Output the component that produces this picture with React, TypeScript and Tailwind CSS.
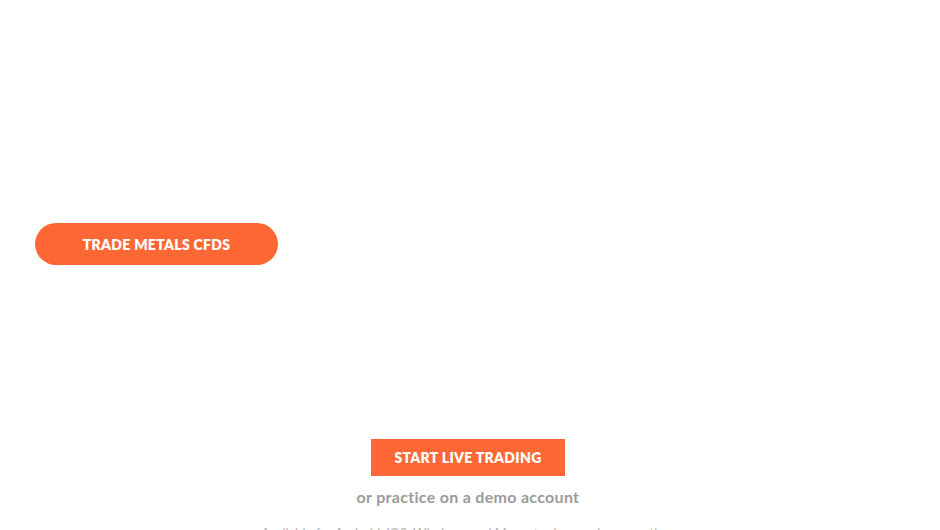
import React from "react";

const App: React.FC = () => {
  return (
    <div
      className="w-[940px] h-[530px] overflow-hidden bg-white"
      style={{ fontFamily: "Lato, 'Liberation Sans', sans-serif" }}
    >
      {/* hero */}
      <div className="h-[439px] pl-[35px] pt-[223px]">
        <button
          type="button"
          className="w-[243px] h-[42px] rounded-full bg-[#ff6835] text-white font-extrabold text-[14px] tracking-[0.3px] uppercase"
        >
          Trade Metals CFDs
        </button>
      </div>

      {/* call to action */}
      <div className="flex flex-col items-center pr-[4px]">
        <button
          type="button"
          className="w-[194px] h-[37px] bg-[#ff6835] text-white font-extrabold text-[14px] tracking-[0.3px] uppercase"
        >
          Start Live Trading
        </button>
        <p className="mt-[11px] text-[16px] font-bold tracking-[0.3px] text-[#9b9b9b] leading-[20px]">
          or practice on a demo account
        </p>
        <p className="mt-[18px] text-[13px] text-[#b5b5b5] leading-[16px]">
          Available for Android, iOS, Windows and Mac – trade anywhere, anytime
        </p>
      </div>
    </div>
  );
};

export default App;
